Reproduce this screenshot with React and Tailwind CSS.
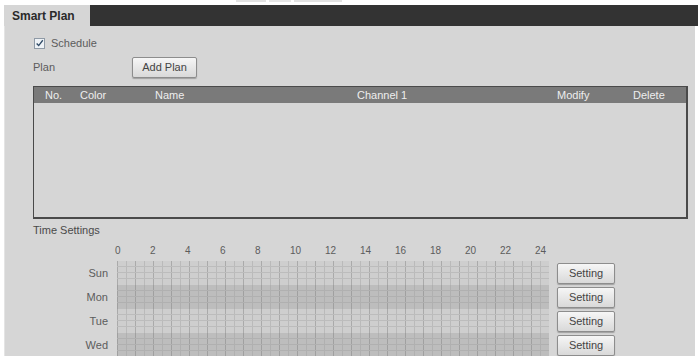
const days = ["Sun", "Mon", "Tue", "Wed"];
const hours = [0, 2, 4, 6, 8, 10, 12, 14, 16, 18, 20, 22, 24];

function HourCell({ dark }) {
    return (
        <div className={`flex w-[18px] h-full border-l ${dark ? "border-[#a0a0a0]" : "border-[#aaaaaa]"}`}>
            <div className={`w-[9px] h-full border-r ${dark ? "border-[#b0b0b0]" : "border-[#bababa]"}`} />
            <div className="w-[8px] h-full" />
        </div>
    );
}

function DayRow({ day, i }) {
    const dark = i % 2 === 1;
    const band = (last) => (
        <div
            className={`flex ${last ? "flex-1" : "h-[6px] border-b"} ${dark ? "border-[#b0b0b0]" : "border-[#bcbcbc]"}`}
        >
            {Array.from({ length: 24 }).map((_, h) => (
                <HourCell key={h} dark={dark} />
            ))}
        </div>
    );
    return (
        <div className="flex items-center h-[24px]">
            <div className="w-[75px] text-right text-[11px] text-[#5c5c5c]">{day}</div>
            <div
                className={`ml-[9px] w-[432px] h-[24px] flex flex-col ${dark ? "bg-[#bdbdbd]" : "bg-[#cecece]"}`}
            >
                {band(false)}
                {band(false)}
                {band(false)}
                {band(true)}
            </div>
            <button className="ml-[8px] w-[58px] h-[21px] rounded-[2px] border border-[#8d8d8d] bg-gradient-to-b from-[#f6f6f6] to-[#d9d9d9] shadow-[0_1px_1px_rgba(0,0,0,0.25)] text-[11px] text-[#444]">
                Setting
            </button>
        </div>
    );
}

export default function App() {
    return (
        <div className="w-[698px] h-[356px] bg-white overflow-hidden font-['Liberation_Sans',Arial,sans-serif]">
            {/* faint remnant of the page title above the tab bar */}
            <div className="h-[5px] flex items-start pl-[236px] gap-[3px]">
                <div className="w-[30px] h-[2px] bg-[#e2e2e2]" />
                <div className="w-[22px] h-[2px] bg-[#e6e6e6]" />
                <div className="w-[48px] h-[2px] bg-[#e2e2e2]" />
            </div>

            <div className="flex h-[21px] ml-[4px]">
                <div className="w-[86px] bg-[#d6d6d6] flex items-center pl-[8px] text-[12px] font-bold text-[#2a2a2a]">
                    Smart Plan
                </div>
                <div className="flex-1 bg-[#333333]" />
            </div>

            <div className="ml-[4px] mr-[3px] h-[330px] bg-[#d6d6d6] border-l border-[#e4e4e4] pl-[28px] pt-[12px]">
                <div className="flex items-center h-[11px] pl-[1px]">
                    <span className="w-[11px] h-[11px] border border-[#8f9aa6] bg-[#eef2f6] flex items-center justify-center">
                        <svg width="11" height="11" viewBox="0 0 11 11">
                            <path d="M2 5.5 L4.5 8 L9.5 1.5" fill="none" stroke="#2f4a66" strokeWidth="1.6" />
                        </svg>
                    </span>
                    <span className="ml-[6px] text-[11px] text-[#5c5c5c]">Schedule</span>
                </div>

                <div className="flex items-center h-[21px] mt-[8px]">
                    <span className="w-[99px] text-[11px] text-[#5c5c5c]">Plan</span>
                    <button className="w-[65px] h-[21px] rounded-[2px] border border-[#8d8d8d] bg-gradient-to-b from-[#f6f6f6] to-[#d9d9d9] shadow-[0_1px_1px_rgba(0,0,0,0.25)] text-[11px] text-[#444]">
                        Add Plan
                    </button>
                </div>

                <div className="mt-[8px] w-[655px] h-[133px] border border-[#4a4a4a] border-b-2 border-r-2 flex flex-col">
                    <div className="h-[16px] bg-[#7a7a7a] flex items-center text-[11px] text-[#eeeeee]">
                        <span className="w-[46px] pl-[11px]">No.</span>
                        <span className="w-[75px]">Color</span>
                        <span className="w-[202px]">Name</span>
                        <span className="w-[200px]">Channel 1</span>
                        <span className="w-[76px]">Modify</span>
                        <span>Delete</span>
                    </div>
                    <div className="flex-1" />
                </div>

                <div className="mt-[5px] h-[12px] flex items-center text-[11px] text-[#4a4a4a]">Time Settings</div>

                <div className="mt-[8px] h-[12px] flex items-center pl-[82px] text-[10px] text-[#5c5c5c]">
                    {hours.map((h) => (
                        <span key={h} className="w-[35px] shrink-0">
                            {h}
                        </span>
                    ))}
                </div>

                <div className="mt-[5px] flex flex-col">
                    {days.map((d, i) => (
                        <DayRow key={d} day={d} i={i} />
                    ))}
                </div>
            </div>
        </div>
    );
}
